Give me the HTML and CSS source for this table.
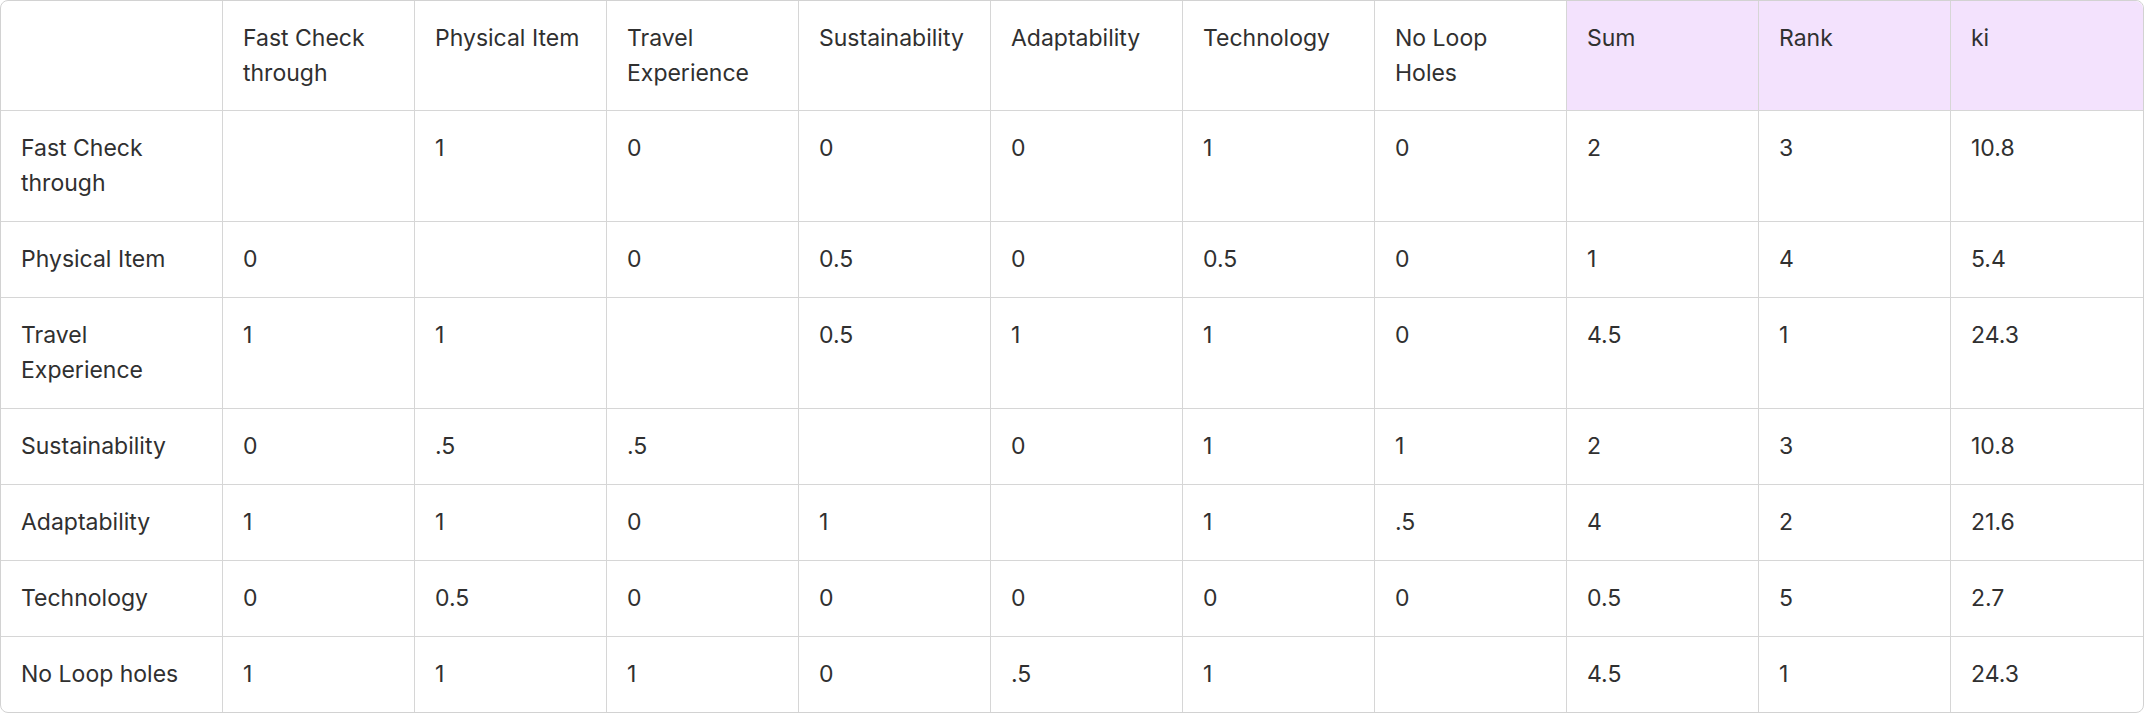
FILE: index.html
```html
<!DOCTYPE html>
<html>
<head>
<meta charset="utf-8">
<link rel="stylesheet" href="styles.css">
</head>
<body>
<div class="wrap">
<table class="matrix">
<colgroup>
<col class="c-first">
<col class="c"><col class="c"><col class="c"><col class="c"><col class="c"><col class="c"><col class="c"><col class="c"><col class="c"><col class="c">
</colgroup>
<thead>
<tr>
<th></th>
<th>Fast Check through</th>
<th>Physical Item</th>
<th>Travel Experience</th>
<th>Sustainability</th>
<th>Adaptability</th>
<th>Technology</th>
<th>No Loop Holes</th>
<th class="hl">Sum</th>
<th class="hl">Rank</th>
<th class="hl last">ki</th>
</tr>
</thead>
<tbody>
<tr><td>Fast Check through</td><td></td><td>1</td><td>0</td><td>0</td><td>0</td><td>1</td><td>0</td><td>2</td><td>3</td><td>10.8</td></tr>
<tr><td>Physical Item</td><td>0</td><td></td><td>0</td><td>0.5</td><td>0</td><td>0.5</td><td>0</td><td>1</td><td>4</td><td>5.4</td></tr>
<tr><td>Travel Experience</td><td>1</td><td>1</td><td></td><td>0.5</td><td>1</td><td>1</td><td>0</td><td>4.5</td><td>1</td><td>24.3</td></tr>
<tr><td>Sustainability</td><td>0</td><td>.5</td><td>.5</td><td></td><td>0</td><td>1</td><td>1</td><td>2</td><td>3</td><td>10.8</td></tr>
<tr><td>Adaptability</td><td>1</td><td>1</td><td>0</td><td>1</td><td></td><td>1</td><td>.5</td><td>4</td><td>2</td><td>21.6</td></tr>
<tr><td>Technology</td><td>0</td><td>0.5</td><td>0</td><td>0</td><td>0</td><td>0</td><td>0</td><td>0.5</td><td>5</td><td>2.7</td></tr>
<tr><td>No Loop holes</td><td>1</td><td>1</td><td>1</td><td>0</td><td>.5</td><td>1</td><td></td><td>4.5</td><td>1</td><td>24.3</td></tr>
</tbody>
</table>
</div>
</body>
</html>
```
FILE: styles.css
```css
html, body {
  margin: 0;
  padding: 0;
  background: #ffffff;
}
.wrap {
  width: 2144px;
}
.matrix {
  width: 2144px;
  table-layout: fixed;
  border-collapse: separate;
  border-spacing: 0;
  border: 1px solid #d2d2d2;
  border-radius: 8px;
  font-family: Inter, "Noto Sans", sans-serif;
  font-size: 23px;
  line-height: 35px;
  color: #303030;
}
.c-first { width: 222px; }
.c { width: 192px; }
.matrix th,
.matrix td {
  text-align: left;
  font-weight: 400;
  vertical-align: top;
  padding: 20px 16px 20px 20px;
  border-right: 1px solid #d6d6d6;
  border-bottom: 1px solid #d6d6d6;
  overflow-wrap: break-word;
}
.matrix th {
  padding-bottom: 19px;
}
.matrix tr > :last-child {
  border-right: none;
}
.matrix tbody tr:last-child td {
  border-bottom: none;
}
.matrix th:first-child {
  border-top-left-radius: 8px;
}
.matrix th.hl {
  background: #f3e2fd;
}
.matrix th.last {
  border-top-right-radius: 8px;
}
```
